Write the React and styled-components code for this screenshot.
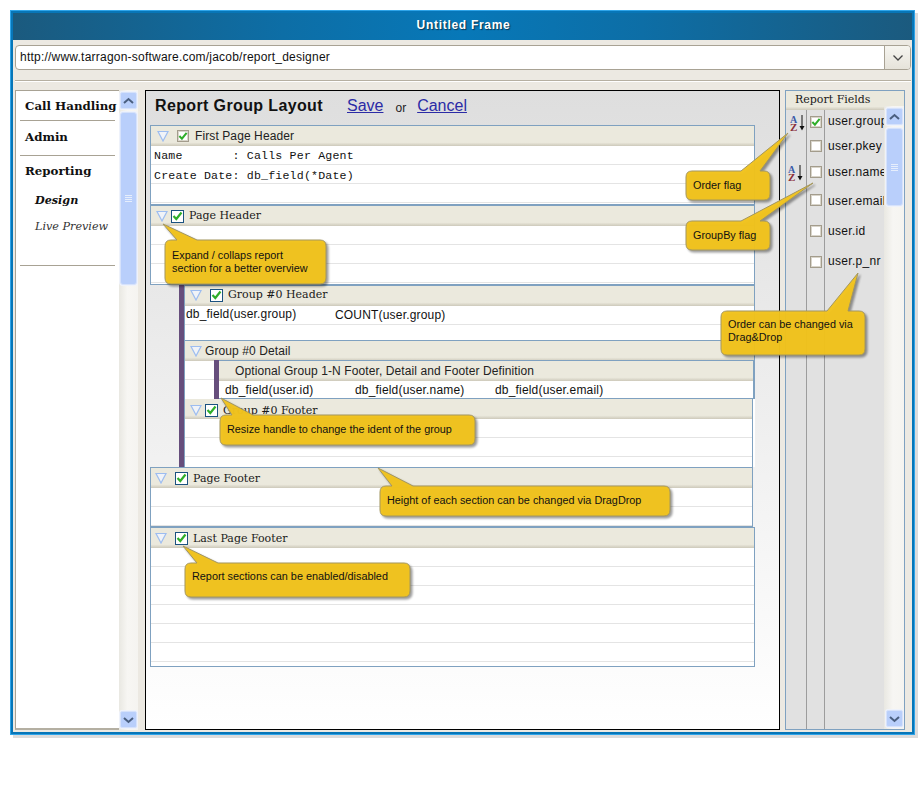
import React from "react";
import styled, { createGlobalStyle } from "styled-components";

const Global = createGlobalStyle`
  html, body { margin: 0; padding: 0; background: #fff; }
  body { font-family: "Liberation Sans", Arial, sans-serif; }
`;

const Page = styled.div`
  position: relative;
  width: 924px;
  height: 786px;
  padding: 10px 0 0 10px;
  box-sizing: border-box;
  overflow: hidden;
`;
const Frame = styled.div`
  width: 905px;
  height: 725px;
  box-sizing: border-box;
  border: 1px solid #2fa4e8;
  box-shadow: 3px 3px 0 #dcdcdc;
  display: flex;
  flex-direction: column;
`;
const FrameInner = styled.div`
  flex: 1;
  min-height: 0;
  border: 2px solid #0776b8;
  display: flex;
  flex-direction: column;
  background: #ece9e2;
`;
const TitleBar = styled.div`
  height: 27px;
  flex: none;
  box-sizing: border-box;
  padding: 0 0 3px 2px;
  display: flex;
  align-items: center;
  justify-content: center;
  background: linear-gradient(90deg, #1b5a7e 0%, #0d6ea6 30%, #0778b8 50%, #0d6ea6 70%, #1b5a7e 100%);
  color: #fff;
  font-weight: bold;
  font-size: 12px;
  letter-spacing: 0.7px;
  text-shadow: 1px 1px 1px #0b3550;
`;
const UrlRow = styled.div`
  flex: none;
  height: 25px;
  margin: 5px 1px 0 2px;
  display: flex;
  box-sizing: border-box;
  border: 1px solid #a8a294;
  border-radius: 4px;
  background: #fff;
  overflow: hidden;
`;
const UrlText = styled.div`
  flex: 1;
  font-size: 12px;
  letter-spacing: 0.22px;
  line-height: 22px;
  padding-left: 4px;
  color: #111;
`;
const UrlButton = styled.div`
  width: 25px;
  border-left: 1px solid #a8a294;
  background: linear-gradient(#f6f5f0, #e6e3da);
  display: flex;
  align-items: center;
  justify-content: center;
  color: #444;
`;
const Separator = styled.div`
  flex: none;
  margin: 10px 1px 0 2px;
  height: 1px;
  background: #b6b0a2;
  box-shadow: 0 1px 0 #fff;
`;
const Columns = styled.div`
  flex: 1;
  min-height: 0;
  display: flex;
  margin: 9px 0 2px 2px;
`;

/* ---------- left nav ---------- */
const NavPanel = styled.div`
  width: 123px;
  flex: none;
  display: flex;
`;
const NavBody = styled.nav`
  width: 104px;
  flex: none;
  background: #fff;
  box-sizing: border-box;
  border-left: 1px solid #a8a294;
  border-top: 1px solid #a8a294;
  border-bottom: 2px solid #b4afa2;
  padding: 1px 4px 0;
  display: flex;
  flex-direction: column;
`;
const NavItem = styled.div`
  font-family: "DejaVu Serif", serif;
  font-size: ${(p) => (p.$sub ? "11.2px" : "11.8px")};
  font-weight: ${(p) => (p.$bold ? "bold" : "normal")};
  font-style: ${(p) => (p.$sub ? "italic" : "normal")};
  color: ${(p) => (p.$bold ? "#111" : "#333")};
  height: ${(p) => p.$h}px;
  line-height: ${(p) => p.$h - (p.$lift || 0)}px;
  padding-left: ${(p) => (p.$sub ? 15 : 5)}px;
  white-space: nowrap;
`;
const NavRule = styled.div`
  height: 1px;
  width: 95px;
  flex: none;
  background: #a8a294;
  margin-top: ${(p) => p.$mt || 0}px;
`;

/* ---------- scrollbar ---------- */
const Track = styled.div`
  width: ${(p) => p.$w}px;
  flex: none;
  display: flex;
  flex-direction: column;
  align-items: center;
  padding: 2px 0;
  box-sizing: border-box;
  background: linear-gradient(90deg, #e9e8e2, #f7f6f3 45%, #f5f4f0 100%);
`;
const ScrollBtn = styled.div`
  width: 17px;
  height: 17px;
  flex: none;
  box-sizing: border-box;
  border: 1px solid #d6e2fb;
  border-radius: 2px;
  background: #b9cffb;
  box-shadow: 0 0 0 1px #eef2fb;
  display: flex;
  align-items: center;
  justify-content: center;
  margin-top: ${(p) => (p.$end ? "auto" : "0")};
`;
const Thumb = styled.div`
  width: 17px;
  height: ${(p) => p.$h}px;
  flex: none;
  margin-top: 3px;
  box-sizing: border-box;
  border: 1px solid #d6e2fb;
  border-radius: 3px;
  background: #b9cffb;
  box-shadow: 0 0 0 1px #eef2fb;
  display: flex;
  flex-direction: column;
  align-items: center;
  justify-content: center;
  gap: 1px;
`;
const Grip = styled.span`
  width: 7px;
  height: 1px;
  background: #e6eefc;
`;

function Scrollbar({ w, thumb }) {
  return (
    <Track $w={w}>
      <ScrollBtn>
        <svg width="11" height="8" viewBox="0 0 11 8"><path d="M1 6 L5.5 2 L10 6" fill="none" stroke="#4a5f80" strokeWidth="2" /></svg>
      </ScrollBtn>
      <Thumb $h={thumb}>
        <Grip /><Grip /><Grip /><Grip />
      </Thumb>
      <ScrollBtn $end>
        <svg width="11" height="8" viewBox="0 0 11 8"><path d="M1 2 L5.5 6 L10 2" fill="none" stroke="#4a5f80" strokeWidth="2" /></svg>
      </ScrollBtn>
    </Track>
  );
}

/* ---------- main panel ---------- */
const MainPanel = styled.main`
  width: 635px;
  flex: none;
  margin-left: 7px;
  box-sizing: border-box;
  border: 1px solid #000;
  background: linear-gradient(#dedede, #ffffff);
  padding: 0 24px 0 4px;
  overflow: hidden;
`;
const TitleRow = styled.div`
  height: 34px;
  display: flex;
  align-items: center;
  padding: 0 0 4px 5px;
  box-sizing: border-box;
`;
const PanelTitle = styled.h1`
  margin: 0;
  font-size: 16px;
  font-weight: bold;
  color: #111;
  width: 192px;
  letter-spacing: 0.37px;
`;
const TopLink = styled.a`
  font-size: 16px;
  color: #2b2ba6;
  text-decoration: underline;
`;
const OrText = styled.span`
  font-size: 12px;
  color: #222;
  margin: 3px 11px 0 12px;
`;
const Section = styled.section`
  height: ${(p) => p.$h}px;
  box-sizing: border-box;
  margin-right: ${(p) => p.$mr ?? 0}px;
  border: 1px solid #7fa1c0;
  border-top-width: ${(p) => (p.$noTop ? 0 : 1)}px;
  border-bottom-width: ${(p) => (p.$noBottom ? 0 : 1)}px;
  background: #fff;
  overflow: hidden;
`;
const Head = styled.div`
  height: 20px;
  display: flex;
  align-items: center;
  box-sizing: border-box;
  padding-left: ${(p) => p.$pad}px;
  padding-top: ${(p) => Math.max(p.$shift || 0, 0) * 2}px;
  padding-bottom: ${(p) => Math.max(-(p.$shift || 0), 0) * 2}px;
  background: linear-gradient(#ebe9dd 0, #ebe9dd 82%, #cdc9ba 100%);
`;
const Tri = styled.svg`
  width: 12px;
  height: 12px;
  flex: none;
  margin-right: ${(p) => p.$gap}px;
`;
const Box = styled.span`
  width: ${(p) => (p.$plain ? 12 : 13)}px;
  height: ${(p) => (p.$plain ? 12 : 13)}px;
  flex: none;
  box-sizing: border-box;
  border: 1px solid ${(p) => (p.$plain ? "#a39c8c" : "#1b5280")};
  box-shadow: ${(p) => (p.$plain ? "inset 0 0 0 1px #d9d5cb" : "none")};
  background: #fff;
  display: inline-flex;
  align-items: center;
  justify-content: center;
  margin-right: ${(p) => p.$mr ?? 5}px;
`;
const HeadSerif = styled.span`
  font-family: "DejaVu Serif", serif;
  font-size: 11px;
  color: #1a1a1a;
  white-space: nowrap;
  position: relative;
  top: ${(p) => p.$top ?? -1}px;
`;
const HeadSans = styled.span`
  font-size: 12px;
  letter-spacing: 0.1px;
  color: #222;
  white-space: nowrap;
`;
const Row = styled.div`
  height: 19px;
  box-sizing: border-box;
  border-bottom: 1px solid #e4e4e4;
  display: flex;
  align-items: center;
  padding-left: ${(p) => p.$pad ?? 0}px;
  padding-top: ${(p) => p.$pt ?? 0}px;
  white-space: nowrap;
  font-size: 12px;
  letter-spacing: 0.18px;
  color: #111;
`;
const MonoText = styled.span`
  font-family: "Liberation Mono", monospace;
  font-size: 11.6px;
  white-space: pre;
  color: #111;
`;
const Cell = styled.span`
  width: ${(p) => p.$w}px;
  flex: none;
  position: relative;
  top: ${(p) => p.$up || 0}px;
`;
const GroupBlock = styled.div`
  margin-left: 29px;
  height: 182px;
  border-left: 5px solid #664e7c;
  background: #fff;
`;
const DetailBody = styled.div`
  display: flex;
`;
const DetailSide = styled.div`
  width: 29px;
  flex: none;
`;
const Nested = styled.div`
  flex: 1;
  margin-top: -1px;
  height: 39px;
  box-sizing: border-box;
  border-left: 5px solid #664e7c;
`;
const NestedInner = styled.div`
  height: 39px;
  box-sizing: border-box;
  border: 1px solid #7fa1c0;
  border-left: 0;
  background: #fff;
`;
const NestedRow = styled.div`
  height: 17px;
  display: flex;
  align-items: center;
  padding-left: 6px;
  font-size: 12px;
  letter-spacing: 0.18px;
  color: #111;
  white-space: nowrap;
`;

/* ---------- right panel ---------- */
const FieldPanel = styled.aside`
  width: 120px;
  flex: none;
  margin-left: 5px;
  box-sizing: border-box;
  border: 1px solid #7fa1c0;
  display: flex;
  flex-direction: column;
  background: #e1e1e1;
`;
const FieldHead = styled.div`
  height: 19px;
  flex: none;
  box-sizing: border-box;
  padding-left: 9px;
  display: flex;
  align-items: center;
  background: linear-gradient(#ebe9dd 0, #ebe9dd 82%, #cdc9ba 100%);
`;
const FieldBody = styled.div`
  flex: 1;
  min-height: 0;
  display: flex;
`;
const FieldRows = styled.div`
  flex: 1;
  min-width: 0;
  display: flex;
  flex-direction: column;
`;
const ScrollSlot = styled.div`
  display: flex;
  margin-top: -4px;
`;
const FieldRow = styled.div`
  height: ${(p) => p.$h}px;
  flex: ${(p) => (p.$fill ? "1" : "none")};
  display: grid;
  grid-template-columns: 21px 18px minmax(0, 1fr);
`;
const SortCell = styled.div`
  border-right: 1px solid #9c9c9c;
  display: flex;
  align-items: center;
  justify-content: center;
`;
const CheckCell = styled.div`
  border-right: 1px solid #9c9c9c;
  display: flex;
  align-items: center;
  justify-content: center;
  padding-left: 1px;
`;
const NameCell = styled.div`
  padding-left: 3px;
  padding-top: ${(p) => Math.max(p.$dy || 0, 0) * 2}px;
  padding-bottom: ${(p) => Math.max(-(p.$dy || 0), 0) * 2}px;
  box-sizing: border-box;
  font-size: 12px;
  letter-spacing: 0.3px;
  color: #111;
  white-space: nowrap;
  overflow: hidden;
  display: flex;
  align-items: center;
`;
const SortSvg = styled.svg`
  flex: none;
  overflow: visible;
  transform: translateX(${(p) => p.$dx}px);
`;

/* ---------- callouts ---------- */
const CalloutBox = styled.div`
  position: absolute;
  left: ${(p) => p.$x}px;
  top: ${(p) => p.$y}px;
  width: ${(p) => p.$w}px;
  height: ${(p) => p.$h}px;
  display: flex;
  align-items: center;
  padding: 0 0 ${(p) => p.$pb || 0}px 7px;
  box-sizing: border-box;
  font-size: 10.85px;
  line-height: 13px;
  color: #111;
  white-space: pre;
`;
const CalloutShape = styled.svg`
  position: absolute;
  left: 0;
  top: 0;
  overflow: visible;
  filter: drop-shadow(2px 2px 1px rgba(0, 0, 0, 0.4));
`;
const CalloutText = styled.span`
  position: relative;
`;

function Callout({ x, y, w, h, tip, base, pb, children }) {
  const r = 6;
  const [tx, ty] = [tip[0] - x, tip[1] - y];
  const [a, b] = [base[0] - x, base[1] - x];
  const d = `M${r} 0 L${a} 0 L${tx} ${ty} L${b} 0 L${w - r} 0 Q${w} 0 ${w} ${r} L${w} ${h - r} Q${w} ${h} ${w - r} ${h} L${r} ${h} Q0 ${h} 0 ${h - r} L0 ${r} Q0 0 ${r} 0 Z`;
  return (
    <CalloutBox $x={x} $y={y} $w={w} $h={h} $pb={pb}>
      <CalloutShape width={w} height={h}>
        <path d={d} fill="#f2c31c" fillOpacity="0.97" stroke="#a3965f" strokeWidth="1" />
      </CalloutShape>
      <CalloutText>{children}</CalloutText>
    </CalloutBox>
  );
}

const Check = () => (
  <svg width="11" height="10" viewBox="0 0 11 10"><path d="M1.5 5 L4.3 8 L9.5 1.5" fill="none" stroke="#2fae2a" strokeWidth="2.2" /></svg>
);
const Triangle = ({ gap }) => (
  <Tri $gap={gap} viewBox="0 0 12 12"><path d="M1 1.5 H11 L6 11 Z" fill="#f0f3f8" stroke="#9dbdf0" strokeWidth="1.2" /></Tri>
);
const SortIcon = ({ dx = 0 }) => (
  <SortSvg $dx={dx} width="20" height="18" viewBox="0 0 20 18">
    <text x="2.5" y="9.5" fontFamily="Liberation Serif, serif" fontWeight="bold" fontSize="10" fill="#3a5aa8">A</text>
    <text x="2.5" y="17.5" fontFamily="Liberation Serif, serif" fontWeight="bold" fontSize="11" fill="#8a2f3a">Z</text>
    <path d="M14.5 2 V15" stroke="#111" strokeWidth="1" />
    <path d="M12 13 L14.5 17.5 L17 13 Z" fill="#111" />
  </SortSvg>
);

const fields = [
  { n: "user.group", h: 23, sort: true, dx: 1.5, on: true, dy: -1 },
  { n: "user.pkey", h: 25 },
  { n: "user.name", h: 27, sort: true, dx: -0.5 },
  { n: "user.email", h: 30, dy: 1 },
  { n: "user.id", h: 31 },
  { n: "user.p_nr", h: 32, dy: -1 },
];

const Rows = ({ n }) => Array.from({ length: n }, (_, i) => <Row key={i} />);

export default function App() {
  return (
    <Page>
      <Global />
      <Frame>
        <FrameInner>
          <TitleBar>Untitled Frame</TitleBar>
          <UrlRow>
            <UrlText>http://www.tarragon-software.com/jacob/report_designer</UrlText>
            <UrlButton>
              <svg width="12" height="8" viewBox="0 0 12 8"><path d="M1.5 1.5 L6 6 L10.5 1.5" fill="none" stroke="#444" strokeWidth="1.3" /></svg>
            </UrlButton>
          </UrlRow>
          <Separator />
          <Columns>
            <NavPanel>
              <NavBody>
                <NavItem $bold $h={28}>Call Handling</NavItem>
                <NavRule />
                <NavItem $bold $h={34} $lift={2}>Admin</NavItem>
                <NavRule />
                <NavItem $bold $h={31}>Reporting</NavItem>
                <NavItem $bold $sub $h={27}>Design</NavItem>
                <NavItem $sub $h={26}>Live Preview</NavItem>
                <NavRule $mt={25} />
              </NavBody>
              <Scrollbar w={19} thumb={173} />
            </NavPanel>
            <MainPanel>
              <TitleRow>
                <PanelTitle>Report Group Layout</PanelTitle>
                <TopLink>Save</TopLink>
                <OrText>or</OrText>
                <TopLink>Cancel</TopLink>
              </TitleRow>
              <Section $h={80}>
                <Head $pad={6}>
                  <Triangle gap={8} />
                  <Box $plain $mr={6}><Check /></Box>
                  <HeadSans>First Page Header</HeadSans>
                </Head>
                <Row $pad={3}><MonoText>Name       : Calls Per Agent</MonoText></Row>
                <Row $pad={3} $pt={2}><MonoText>Create Date: db_field(*Date)</MonoText></Row>
                <Row />
              </Section>
              <Section $h={80}>
                <Head $pad={5}>
                  <Triangle gap={3} />
                  <Box><Check /></Box>
                  <HeadSerif>Page Header</HeadSerif>
                </Head>
                <Rows n={3} />
              </Section>
              <GroupBlock>
                <Section $h={55} $noBottom>
                  <Head $pad={5} $shift={-1}>
                    <Triangle gap={8} />
                    <Box><Check /></Box>
                    <HeadSerif>Group #0 Header</HeadSerif>
                  </Head>
                  <Row $pad={1}>
                    <Cell $w={149} $up={-1}>db_field(user.group)</Cell>
                    <Cell $w={120}>COUNT(user.group)</Cell>
                  </Row>
                </Section>
                <Section $h={59} $noBottom>
                  <Head $pad={5}>
                    <Triangle gap={3} />
                    <HeadSans>Group #0 Detail</HeadSans>
                  </Head>
                  <DetailBody>
                    <DetailSide><Rows n={1} /></DetailSide>
                    <Nested>
                      <NestedInner>
                        <Head $pad={16}><HeadSans>Optional Group 1-N Footer, Detail and Footer Definition</HeadSans></Head>
                        <NestedRow>
                          <Cell $w={130}>db_field(user.id)</Cell>
                          <Cell $w={140}>db_field(user.name)</Cell>
                          <Cell $w={130}>db_field(user.email)</Cell>
                        </NestedRow>
                      </NestedInner>
                    </Nested>
                  </DetailBody>
                </Section>
                <Section $h={68} $noTop $noBottom $mr={2}>
                  <Head $pad={5} $shift={1}>
                    <Triangle gap={3} />
                    <Box><Check /></Box>
                    <HeadSerif $top={0}>Group #0 Footer</HeadSerif>
                  </Head>
                  <Rows n={2} />
                </Section>
              </GroupBlock>
              <Section $h={60} $mr={2}>
                <Head $pad={4}>
                  <Triangle gap={8} />
                  <Box><Check /></Box>
                  <HeadSerif $top={0}>Page Footer</HeadSerif>
                </Head>
                <Rows n={2} />
              </Section>
              <Section $h={140}>
                <Head $pad={4}>
                  <Triangle gap={8} />
                  <Box><Check /></Box>
                  <HeadSerif $top={0}>Last Page Footer</HeadSerif>
                </Head>
                <Rows n={6} />
              </Section>
            </MainPanel>
            <FieldPanel>
              <FieldHead><HeadSerif>Report Fields</HeadSerif></FieldHead>
              <FieldBody>
                <FieldRows>
                  {fields.map((f) => (
                    <FieldRow key={f.n} $h={f.h}>
                      <SortCell>{f.sort && <SortIcon dx={f.dx} />}</SortCell>
                      <CheckCell><Box $plain $mr={0}>{f.on && <Check />}</Box></CheckCell>
                      <NameCell $dy={f.dy}>{f.n}</NameCell>
                    </FieldRow>
                  ))}
                  <FieldRow $fill><SortCell /><CheckCell /><NameCell /></FieldRow>
                </FieldRows>
                <ScrollSlot><Scrollbar w={20} thumb={78} /></ScrollSlot>
              </FieldBody>
            </FieldPanel>
          </Columns>
        </FrameInner>
      </Frame>
      <Callout x={686} y={171} w={84} h={29} pb={1} tip={[788, 133]} base={[741, 760]}>Order flag</Callout>
      <Callout x={686} y={221} w={84} h={29} pb={1} tip={[813, 183]} base={[741, 760]}>GroupBy flag</Callout>
      <Callout x={721} y={311} w={144} h={44} pb={4} tip={[858, 273]} base={[827, 848]}>{"Order can be changed via\nDrag&Drop"}</Callout>
      <Callout x={165} y={240} w={161} h={44} tip={[163, 224]} base={[177, 197]}>{"Expand / collaps report\nsection for a better overview"}</Callout>
      <Callout x={220} y={415} w={255} h={30} pb={2} tip={[221, 398]} base={[232, 253]}>Resize handle to change the ident of the group</Callout>
      <Callout x={380} y={486} w={290} h={30} pb={2} tip={[378, 468]} base={[392, 413]}>Height of each section can be changed via DragDrop</Callout>
      <Callout x={185} y={563} w={225} h={34} pb={7} tip={[183, 546]} base={[197, 218]}>Report sections can be enabled/disabled</Callout>
    </Page>
  );
}
